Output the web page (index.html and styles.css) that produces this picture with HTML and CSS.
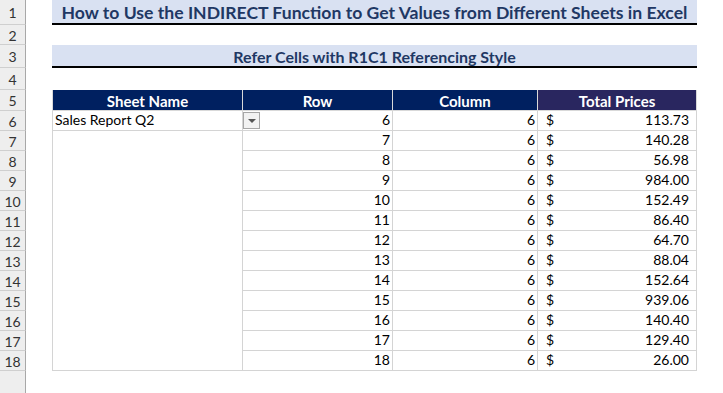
FILE: index.html
```html
<!DOCTYPE html>
<html>
<head>
<meta charset="utf-8">
<link rel="stylesheet" href="styles.css">
</head>
<body>
<div class="sheet">
  <div class="rh">1</div><div class="band title">How to Use the INDIRECT Function to Get Values from Different Sheets in Excel</div>
  <div class="rh">2</div>
  <div class="rh">3</div><div class="band subtitle">Refer Cells with R1C1 Referencing Style</div>
  <div class="rh">4</div>
  <div class="rh">5</div><div class="th b">Sheet Name</div><div class="th c">Row</div><div class="th d">Column</div><div class="th e th-e">Total Prices</div>
  <div class="rh">6</div><div class="td b left">Sales Report Q2</div><div class="td c num">6<span class="dd"><span class="tri"></span></span></div><div class="td d num">6</div><div class="td e money"><span>$</span><span>113.73</span></div>
  <div class="rh">7</div><div class="td b merged"></div><div class="td c num">7</div><div class="td d num">6</div><div class="td e money"><span>$</span><span>140.28</span></div>
  <div class="rh">8</div><div class="td c num">8</div><div class="td d num">6</div><div class="td e money"><span>$</span><span>56.98</span></div>
  <div class="rh">9</div><div class="td c num">9</div><div class="td d num">6</div><div class="td e money"><span>$</span><span>984.00</span></div>
  <div class="rh">10</div><div class="td c num">10</div><div class="td d num">6</div><div class="td e money"><span>$</span><span>152.49</span></div>
  <div class="rh">11</div><div class="td c num">11</div><div class="td d num">6</div><div class="td e money"><span>$</span><span>86.40</span></div>
  <div class="rh">12</div><div class="td c num">12</div><div class="td d num">6</div><div class="td e money"><span>$</span><span>64.70</span></div>
  <div class="rh">13</div><div class="td c num">13</div><div class="td d num">6</div><div class="td e money"><span>$</span><span>88.04</span></div>
  <div class="rh">14</div><div class="td c num">14</div><div class="td d num">6</div><div class="td e money"><span>$</span><span>152.64</span></div>
  <div class="rh">15</div><div class="td c num">15</div><div class="td d num">6</div><div class="td e money"><span>$</span><span>939.06</span></div>
  <div class="rh">16</div><div class="td c num">16</div><div class="td d num">6</div><div class="td e money"><span>$</span><span>140.40</span></div>
  <div class="rh">17</div><div class="td c num">17</div><div class="td d num">6</div><div class="td e money"><span>$</span><span>129.40</span></div>
  <div class="rh">18</div><div class="td c num">18</div><div class="td d num">6</div><div class="td e money"><span>$</span><span>26.00</span></div>
  <div class="rh rh-rest"></div>
</div>
</body>
</html>
```
FILE: styles.css
```css
html, body {
  margin: 0;
  padding: 0;
  background: #ffffff;
}
.sheet {
  display: grid;
  width: 723px;
  height: 393px;
  grid-template-columns: 26px 26px 191px 150px 145px 159px 1fr;
  grid-template-rows: 25px 20px 23px 22px 21px repeat(13, 20px) 1fr;
  font-family: Lato, "Liberation Sans", sans-serif;
  font-size: 14px;
  color: #000;
  overflow: hidden;
}
.rh {
  grid-column: 1;
  background: #eeeeee;
  border-right: 1px solid #a8a8a8;
  border-bottom: 1px solid #cfcfcf;
  display: flex;
  align-items: center;
  justify-content: center;
  font-size: 14px;
  color: #333;
  padding-top: 1px;
  box-sizing: border-box;
}
.rh-rest {
  border-bottom: none;
}
.band {
  grid-column: 3 / 7;
  background: #d9e1f2;
  border-bottom: 2px solid #000;
  display: flex;
  align-items: center;
  justify-content: center;
  color: #1f3864;
  font-weight: bold;
  box-sizing: border-box;
  white-space: nowrap;
}
.title {
  font-size: 17.6px;
  padding-top: 1px;
}
.subtitle {
  font-size: 16px;
  padding-top: 2px;
}
.b { grid-column: 3; }
.c { grid-column: 4; }
.d { grid-column: 5; }
.e { grid-column: 6; }
.th {
  background: #002060;
  color: #fff;
  font-weight: bold;
  font-size: 15px;
  display: flex;
  align-items: center;
  justify-content: center;
  border-right: 1px solid #d9d9d9;
  border-bottom: 1px solid #d9d9d9;
  padding-top: 1px;
  box-sizing: border-box;
}
.th.b { border-left: 1px solid #d9d9d9; }
.th-e { background: #29265f; }
.td {
  border-right: 1px solid #d4d4d4;
  border-bottom: 1px solid #d4d4d4;
  box-sizing: border-box;
  display: flex;
  align-items: flex-end;
  padding: 0 2px 1px 2px;
  line-height: 18px;
  position: relative;
}
.td.b { border-left: 1px solid #d4d4d4; }
.merged {
  grid-row: span 12;
}
.left { justify-content: flex-start; }
.num { justify-content: flex-end; }
.money {
  justify-content: space-between;
  padding-left: 8px;
  padding-right: 7px;
}
.dd {
  position: absolute;
  left: 0;
  top: 1px;
  width: 15px;
  height: 15px;
  border: 1px solid #a6a6a6;
  background: #f2f2f2;
  display: flex;
  align-items: center;
  justify-content: center;
}
.tri {
  width: 0;
  height: 0;
  border-left: 4px solid transparent;
  border-right: 4px solid transparent;
  border-top: 4px solid #555;
  margin-top: 1px;
}
```
